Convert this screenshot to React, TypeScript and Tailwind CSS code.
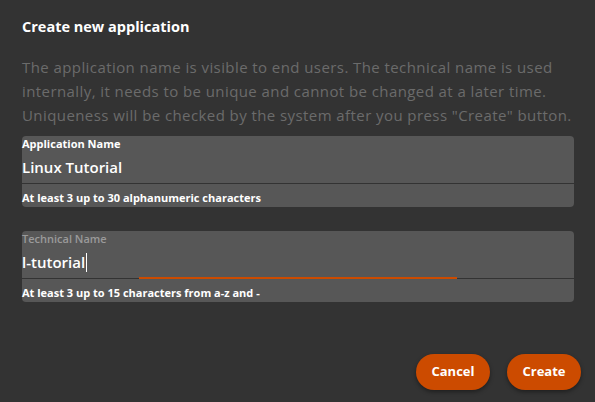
import React from 'react';

const font = { fontFamily: '"Open Sans", "Noto Sans", sans-serif' };

type FieldProps = {
  label: string;
  value: string;
  hint: string;
  focused?: boolean;
};

const Field = ({ label, value, hint, focused }: FieldProps) => (
  <div className="rounded-[4px] bg-[#575757]">
    <div
      className={
        focused
          ? 'text-[11px] font-semibold leading-[15px] text-[#9a9a9a]'
          : 'text-[11px] font-bold leading-[15px] text-white'
      }
    >
      {label}
    </div>
    <div className="relative flex h-[33px] items-center border-b border-[#333333]">
      <span className="text-[15px] font-semibold leading-[20px] text-white">{value}</span>
      {focused && <span className="ml-[1px] h-[19px] w-px bg-white" />}
      {focused && <div className="absolute bottom-[-1px] left-[117px] h-[2px] w-[318px] bg-[#cc4b00]" />}
    </div>
    <div className="h-[23px] pt-[6px] text-[11px] font-bold leading-[15px] text-white">{hint}</div>
  </div>
);

export default function App() {
  return (
    <div className="flex h-[402px] w-[595px] flex-col bg-[#333333] px-[22px] pt-[17px]" style={font}>
      <h1 className="text-[14.5px] font-bold leading-[20px] text-white">Create new application</h1>
      <p className="mr-[-22px] mt-[18px] whitespace-nowrap text-[15px] leading-[24px] tracking-[0.42px] text-[#6b6b6b]">
        The application name is visible to end users. The technical name is used
        <br />
        internally, it needs to be unique and cannot be changed at a later time.
        <br />
        Uniqueness will be checked by the system after you press "Create" button.
      </p>
      <div className="mr-[-1px] mt-[9px] flex flex-col gap-[24px]">
        <Field label="Application Name" value="Linux Tutorial" hint="At least 3 up to 30 alphanumeric characters" />
        <Field label="Technical Name" value="l-tutorial" hint="At least 3 up to 15 characters from a-z and -" focused />
      </div>
      <div className="mr-[-8px] mt-[52px] flex justify-end gap-[17px]">
        <button className="h-[36px] w-[74px] rounded-full bg-[#cc4b00] text-[13px] font-bold text-white shadow-[0_2px_4px_rgba(0,0,0,0.4)]">
          Cancel
        </button>
        <button className="h-[36px] w-[74px] rounded-full bg-[#cc4b00] text-[13px] font-bold text-white shadow-[0_2px_4px_rgba(0,0,0,0.4)]">
          Create
        </button>
      </div>
    </div>
  );
}
